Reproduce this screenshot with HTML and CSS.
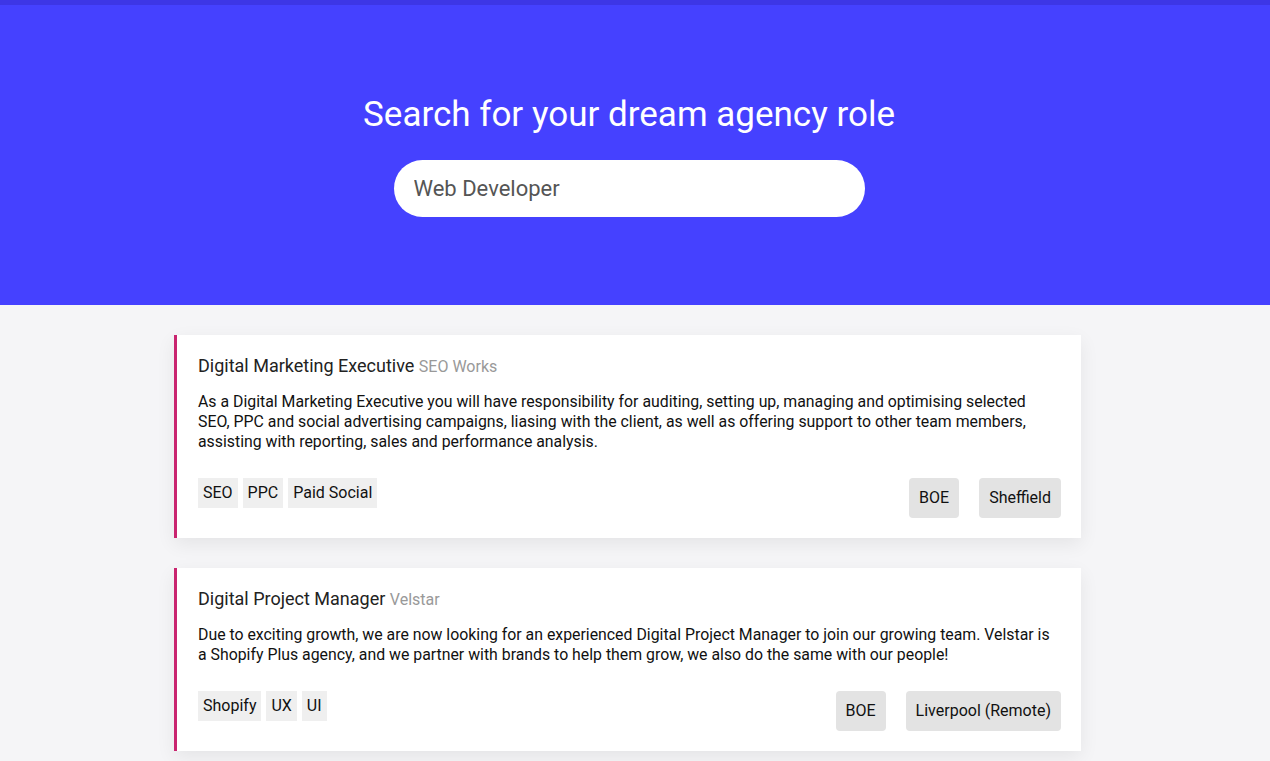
FILE: index.html
```html
<!DOCTYPE html>
<html lang="en">
<head>
    <meta charset="UTF-8">
    <meta name="viewport" content="width=device-width, initial-scale=1.0">
    <title>Agency Jobs</title>
    <link rel="stylesheet" href="styles.css">
</head>
<body>
    <div class="top-bar"></div>
    <header class="hero">
        <h1>Search for your dream agency role</h1>
        <input class="search" type="text" value="Web Developer" placeholder="Job title">
    </header>

    <main class="jobs">
        <div class="job-card">
            <h2 class="job-title">Digital Marketing Executive <span class="company">SEO Works</span></h2>
            <p class="job-desc">As a Digital Marketing Executive you will have responsibility for auditing, setting up, managing and optimising selected SEO, PPC and social advertising campaigns, liasing with the client, as well as offering support to other team members, assisting with reporting, sales and performance analysis.</p>
            <div class="job-footer">
                <div class="tags">
                    <span class="tag">SEO</span>
                    <span class="tag">PPC</span>
                    <span class="tag">Paid Social</span>
                </div>
                <div class="badges">
                    <span class="badge">BOE</span>
                    <span class="badge">Sheffield</span>
                </div>
            </div>
        </div>

        <div class="job-card">
            <h2 class="job-title">Digital Project Manager <span class="company">Velstar</span></h2>
            <p class="job-desc">Due to exciting growth, we are now looking for an experienced Digital Project Manager to join our growing team. Velstar is a Shopify Plus agency, and we partner with brands to help them grow, we also do the same with our people!</p>
            <div class="job-footer">
                <div class="tags">
                    <span class="tag">Shopify</span>
                    <span class="tag">UX</span>
                    <span class="tag">UI</span>
                </div>
                <div class="badges">
                    <span class="badge">BOE</span>
                    <span class="badge">Liverpool (Remote)</span>
                </div>
            </div>
        </div>
    </main>
</body>
</html>
```

FILE: styles.css
```css
* {
    box-sizing: border-box;
}

body {
    margin: 0;
    font-family: Roboto, "Liberation Sans", Arial, sans-serif;
    background-color: #f5f5f7;
    color: #111;
}

.top-bar {
    height: 5px;
    background-color: #3d36e6;
}

.hero {
    height: 300px;
    background-color: #4541ff;
    display: flex;
    flex-direction: column;
    align-items: center;
    padding-top: 89px;
    padding-right: 12px;
}

.hero h1 {
    margin: 0 0 24px;
    color: #fff;
    font-size: 35px;
    font-weight: 400;
    line-height: 42px;
}

.search {
    width: 471px;
    height: 57px;
    border: none;
    border-radius: 29px;
    padding: 0 20px;
    font-family: inherit;
    font-size: 22px;
    color: #555;
    outline: none;
}

.jobs {
    width: 907px;
    margin: 30px 0 0 174px;
}

.job-card {
    background-color: #fff;
    border-left: 3px solid #c9246f;
    padding: 20px 20px 20px 21px;
    margin-bottom: 30px;
    box-shadow: 0 6px 18px rgba(0, 0, 0, 0.07);
}

.job-title {
    margin: 0 0 14px;
    font-size: 18px;
    font-weight: 400;
    line-height: 22px;
    color: #222;
}

.company {
    font-size: 16px;
    color: #999;
}

.job-desc {
    margin: 0 0 26px;
    font-size: 15.85px;
    line-height: 20px;
    color: #111;
}

.job-footer {
    display: flex;
    justify-content: space-between;
    align-items: flex-start;
}

.tags {
    display: flex;
    gap: 5px;
}

.tag {
    background-color: #efefef;
    padding: 0 5px;
    height: 30px;
    line-height: 30px;
    font-size: 16px;
    color: #111;
}

.badges {
    display: flex;
    gap: 20px;
}

.badge {
    background-color: #e3e3e3;
    border-radius: 4px;
    padding: 0 10px;
    height: 40px;
    line-height: 40px;
    font-size: 16px;
    color: #111;
}
```
